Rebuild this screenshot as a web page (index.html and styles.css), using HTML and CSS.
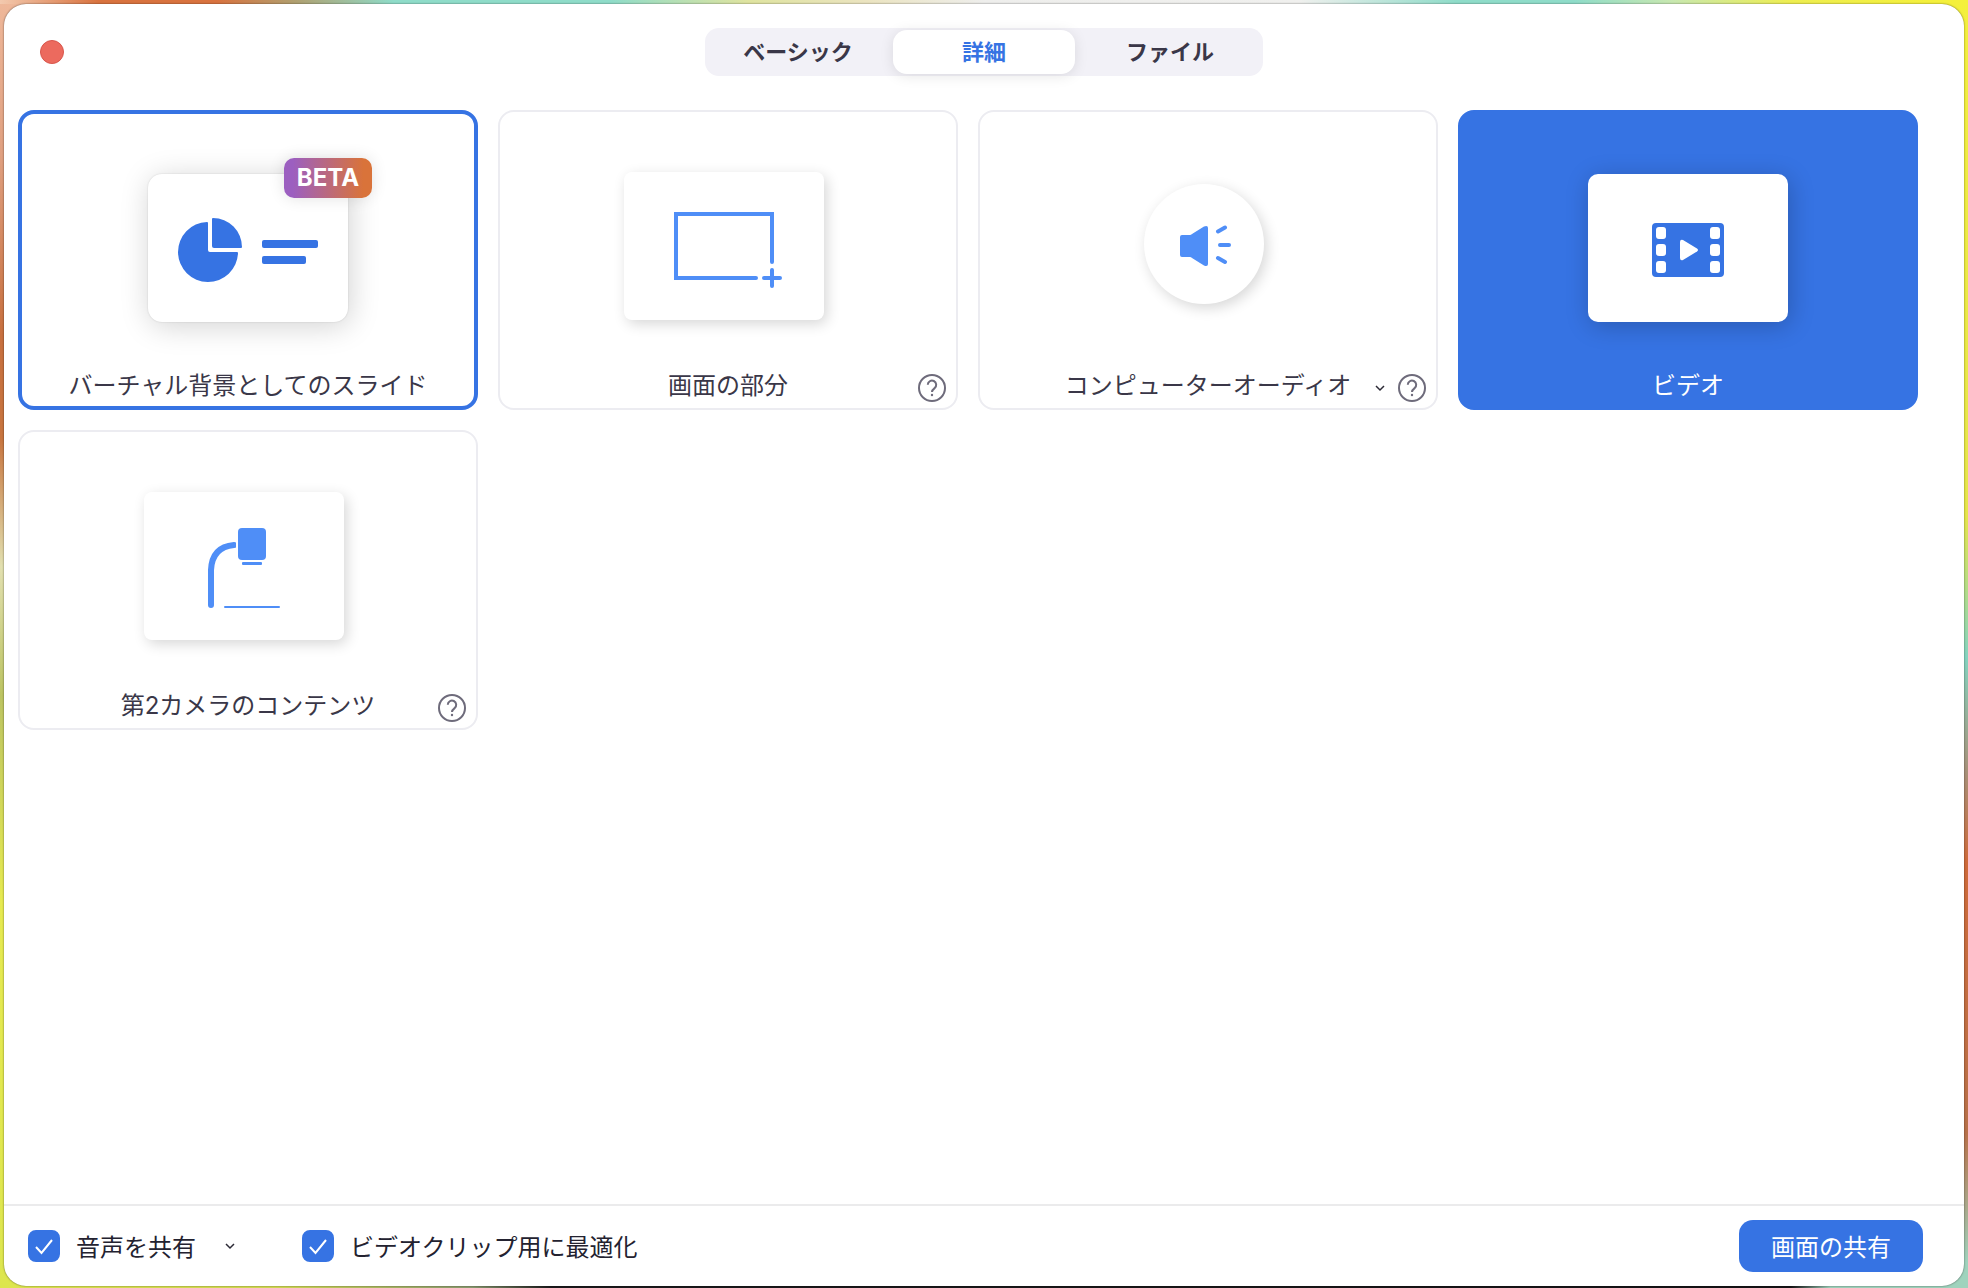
FILE: index.html
```html
<!DOCTYPE html>
<html lang="ja">
<head>
<meta charset="utf-8">
<meta name="viewport" content="width=device-width, initial-scale=1">
<title>画面の共有</title>
<link rel="stylesheet" href="styles.css">
</head>
<body>
<div class="window">
  <header class="titlebar">
    <button class="close" type="button" aria-label="閉じる"></button>
    <nav class="tabs">
      <button class="tab" type="button">ベーシック</button>
      <button class="tab tab-active" type="button">詳細</button>
      <button class="tab" type="button">ファイル</button>
    </nav>
  </header>

  <main class="grid">
    <article class="card card-focused">
      <button class="source" type="button">
        <span class="preview">
          <span class="thumb thumb-raised">
            <svg viewBox="0 0 200 148" aria-hidden="true">
              <path d="M60 49V76a2 2 0 0 0 2 2H89A1 1 0 0 1 90 79A30 30 0 1 1 59 48A1 1 0 0 1 60 49Z"/>
              <path d="M64 45A1 1 0 0 1 65 44A29 29 0 0 1 94 73A1 1 0 0 1 93 74H66a2 2 0 0 1-2-2Z"/>
              <rect x="114" y="66" width="56" height="8" rx="2"/>
              <rect x="114" y="82" width="44" height="8" rx="2"/>
            </svg>
            <span class="badge">BETA</span>
          </span>
        </span>
        <span class="label">バーチャル背景としてのスライド</span>
      </button>
    </article>

    <article class="card">
      <button class="source" type="button">
        <span class="preview preview-flat">
          <span class="thumb">
            <svg viewBox="0 0 200 148" aria-hidden="true">
              <path class="line" stroke-width="4" d="M148 90V42H52V106H132M140 106H156M148 98V114"/>
            </svg>
          </span>
        </span>
        <span class="label">画面の部分</span>
      </button>
      <div class="actions">
        <button class="icon-button help" type="button" aria-label="ヘルプ">
          <svg viewBox="0 0 28 28" aria-hidden="true"><circle cx="14" cy="14" r="13"/><path d="M9.800 10.800a4.200 4.200 0 1 1 6.800 3.300c-1.700 1.300-2.600 2-2.600 4"/><circle class="dot" cx="14" cy="21" r="1.200"/></svg>
        </button>
      </div>
    </article>

    <article class="card">
      <button class="source" type="button">
        <span class="preview preview-flat preview-round">
          <span class="thumb thumb-round">
            <svg viewBox="0 0 120 120" aria-hidden="true">
              <path d="M38 51H46Q47 51 48 50L60 42.500Q64 41 64 44V80Q64 83 60 81.500L48 74Q47 73 46 73H38Q36 73 36 71V53Q36 51 38 51Z"/>
              <path class="line" stroke-width="4" d="M74 47.500L81 43.500M76 61H85M74 74L81 78"/>
            </svg>
          </span>
        </span>
        <span class="label">コンピューターオーディオ</span>
      </button>
      <div class="actions">
        <button class="icon-button" type="button" aria-label="オーディオのオプション">
          <svg class="chevron" viewBox="0 0 12 12" aria-hidden="true"><path d="M2 4L6 8L10 4"/></svg>
        </button>
        <button class="icon-button help" type="button" aria-label="ヘルプ">
          <svg viewBox="0 0 28 28" aria-hidden="true"><circle cx="14" cy="14" r="13"/><path d="M9.800 10.800a4.200 4.200 0 1 1 6.800 3.300c-1.700 1.300-2.600 2-2.600 4"/><circle class="dot" cx="14" cy="21" r="1.200"/></svg>
        </button>
      </div>
    </article>

    <article class="card card-selected">
      <button class="source" type="button">
        <span class="preview">
          <span class="thumb thumb-video">
            <svg viewBox="0 0 200 148" aria-hidden="true">
              <rect x="64" y="49" width="72" height="54" rx="4"/>
              <g class="cutout">
                <rect x="68" y="53" width="10" height="12" rx="3"/>
                <rect x="68" y="70" width="10" height="12" rx="3"/>
                <rect x="68" y="87" width="10" height="12" rx="3"/>
                <rect x="122" y="53" width="10" height="12" rx="3"/>
                <rect x="122" y="70" width="10" height="12" rx="3"/>
                <rect x="122" y="87" width="10" height="12" rx="3"/>
                <path d="M92 68Q92 65 95 66L109 74.500Q111 76 109 77.500L95 86Q92 87 92 84Z"/>
              </g>
            </svg>
          </span>
        </span>
        <span class="label">ビデオ</span>
      </button>
    </article>

    <article class="card">
      <button class="source" type="button">
        <span class="preview preview-flat">
          <span class="thumb">
            <svg viewBox="0 0 200 148" aria-hidden="true">
              <path class="line" stroke-width="6" d="M67 113V78Q68 55 90 53"/>
              <rect class="cutout" x="92" y="48" width="4" height="12"/>
              <rect x="94" y="36" width="28" height="32" rx="4"/>
              <rect x="98" y="70" width="20" height="3" rx="1"/>
              <rect x="80" y="114" width="56" height="2" rx="1"/>
            </svg>
          </span>
        </span>
        <span class="label">第2カメラのコンテンツ</span>
      </button>
      <div class="actions">
        <button class="icon-button help" type="button" aria-label="ヘルプ">
          <svg viewBox="0 0 28 28" aria-hidden="true"><circle cx="14" cy="14" r="13"/><path d="M9.800 10.800a4.200 4.200 0 1 1 6.800 3.300c-1.700 1.300-2.600 2-2.600 4"/><circle class="dot" cx="14" cy="21" r="1.200"/></svg>
        </button>
      </div>
    </article>
  </main>

  <footer class="footer">
    <div class="option">
      <input class="check" type="checkbox" id="share-sound" checked>
      <label for="share-sound">音声を共有</label>
      <button class="icon-button option-menu" type="button" aria-label="音声のオプション">
        <svg class="chevron" viewBox="0 0 12 12" aria-hidden="true"><path d="M2 4L6 8L10 4"/></svg>
      </button>
    </div>
    <div class="option">
      <input class="check" type="checkbox" id="optimize-video" checked>
      <label for="optimize-video">ビデオクリップ用に最適化</label>
    </div>
    <button class="share" type="button">画面の共有</button>
  </footer>
</div>
</body>
</html>
```
FILE: styles.css
```css
:root {
  --blue: #3673e3;
  --light-blue: #4f8ef7;
  --ink: #3a3748;
}

* {
  box-sizing: border-box;
}

body {
  margin: 0;
  min-height: 100vh;
  display: flex;
  padding: 4px 4px 2px;
  font-family: Inter, "Noto Sans CJK JP", sans-serif;
  font-size: 24px;
  line-height: 36px;
  color: var(--ink);
  /* desktop wallpaper showing round the window: top, bottom, left, right */
  background:
    linear-gradient(90deg, #f3c9ae 0%, #d9733f 5%, #d9733f 11%, #b0a070 15%, #8fdcc9 20%, #8fdcc9 31%, #dfe4a0 38%, #ebe4c0 44%, #eeeeec 50%, #f0f0ee 66%, #8fdcc9 74%, #8fdcc9 80%, #c8e8b0 85%, #eeee50 91%, #f4f03c 98%) top / 100% 4px no-repeat,
    linear-gradient(90deg, #dde64e 0%, #d3dc52 14%, #8a9a70 24%, #1c1a1c 28%, #161416 91%, #9fd3bd 93%) bottom / 100% 2px no-repeat,
    linear-gradient(180deg, #efb89a 0%, #e0a080 12%, #c8703f 26%, #c8753f 34%, #e2e0b0 44%, #bcc462 54%, #e6ea50 70%, #dde64e 100%) left / 50% 100% no-repeat,
    linear-gradient(180deg, #f4f03c 0%, #e6e64a 40%, #84d4c0 51%, #a89078 60%, #cf6a3a 67%, #b8714a 88%, #9fd3bd 98%) right / 50% 100% no-repeat;
}

button {
  font: inherit;
  color: inherit;
  border: 0;
  padding: 0;
  margin: 0;
  background: none;
  cursor: pointer;
}

svg {
  display: block;
}

.window {
  flex: 1;
  display: flex;
  flex-direction: column;
  background: #fff;
  border-radius: 22px;
  box-shadow: 0 0 2px rgba(0, 0, 0, 0.6);
}

.titlebar {
  display: grid;
  grid-template-columns: 1fr auto 1fr;
  align-items: center;
  padding: 24px 36px 34px;
}

.close {
  width: 24px;
  height: 24px;
  border: 1px solid #d8564c;
  border-radius: 50%;
  background: #ec6a5e;
}

.tabs {
  display: flex;
  gap: 4px;
  padding: 2px;
  border-radius: 14px;
  background: #f2f1f7;
}

.tab {
  width: 182px;
  height: 44px;
  border-radius: 14px;
  font-size: 22px;
  font-weight: 700;
}

.tab-active {
  background: #fff;
  color: var(--blue);
  box-shadow: 0 2px 14px rgba(0, 0, 0, 0.1);
}

.grid {
  flex: 1;
  display: grid;
  grid-template-columns: repeat(4, 1fr);
  align-content: start;
  gap: 20px;
  padding: 0 46px 20px 14px;
}

.card {
  position: relative;
  display: flex;
  border: 2px solid #ececf1;
  border-radius: 16px;
}

.card-focused {
  border: 4px solid var(--blue);
}

.card-selected {
  border-color: var(--blue);
  background: var(--blue);
  color: #fff;
}

.source {
  flex: 1;
  display: flex;
  flex-direction: column;
  align-items: center;
  min-height: 296px;
}

.card-focused .source {
  min-height: 292px;
  margin: -2px;
}

.preview {
  flex: 1;
  display: flex;
  align-items: center;
  padding-top: 20px;
}

.preview-flat {
  padding-top: 16px;
  padding-right: 8px;
}

.preview-round {
  padding-top: 12px;
}

.thumb {
  position: relative;
  width: 200px;
  height: 148px;
  border-radius: 8px;
  background: #fff;
  fill: var(--light-blue);
  box-shadow: 3px 4px 14px rgba(0, 0, 0, 0.16);
}

.thumb-raised {
  border-radius: 14px;
  fill: var(--blue);
  box-shadow: 0 0 2px rgba(0, 0, 0, 0.14), 2px 4px 30px rgba(0, 0, 0, 0.18);
}

.thumb-round {
  width: 120px;
  height: 120px;
  border-radius: 50%;
}

.thumb-video {
  border-radius: 10px;
  fill: var(--blue);
  box-shadow: 2px 4px 24px rgba(0, 0, 0, 0.22);
}

.line {
  fill: none;
  stroke: var(--light-blue);
  stroke-linecap: round;
}

.cutout {
  fill: #fff;
}

.badge {
  position: absolute;
  top: -16px;
  right: -24px;
  width: 88px;
  height: 40px;
  border-radius: 10px;
  background: linear-gradient(90deg, #9c5fc0 10%, #d9733a 90%);
  box-shadow: 0 0 16px rgba(0, 0, 0, 0.12);
  font-weight: 700;
  font-size: 24px;
  line-height: 40px;
  color: #fff;
}

.label {
  padding: 4px 0;
}

.actions {
  position: absolute;
  right: 10px;
  bottom: 6px;
  display: flex;
  align-items: center;
  gap: 6px;
}

.icon-button {
  flex: none;
  padding: 0 6px;
}

.option-menu {
  margin-left: 6px;
}

.help {
  width: 28px;
  height: 28px;
  padding: 0;
  fill: none;
  stroke: #6e6b7b;
  stroke-width: 2;
}

.help .dot {
  fill: #6e6b7b;
  stroke: none;
}

.chevron {
  width: 12px;
  height: 12px;
  fill: none;
  stroke: #2c2a36;
  stroke-width: 1.5;
}

.footer {
  display: flex;
  align-items: center;
  gap: 60px;
  padding: 14px 41px 14px 24px;
  border-top: 2px solid #ebebec;
  color: #232230;
}

.option {
  display: flex;
  align-items: center;
  gap: 16px;
}

.option label,
.share {
  padding-top: 3px;
}

.check {
  appearance: none;
  width: 32px;
  height: 32px;
  margin: 0;
  border-radius: 8px;
  border: 2px solid var(--blue);
}

.check:checked {
  background: var(--blue) url("data:image/svg+xml,%3Csvg xmlns='http://www.w3.org/2000/svg' viewBox='0 0 32 32'%3E%3Cpath d='M8 17L13.500 23L24 10' fill='none' stroke='white' stroke-width='2'/%3E%3C/svg%3E") center / 32px 32px;
}

.share {
  width: 184px;
  height: 52px;
  margin-left: auto;
  border-radius: 14px;
  background: var(--blue);
  color: #fff;
}
```
